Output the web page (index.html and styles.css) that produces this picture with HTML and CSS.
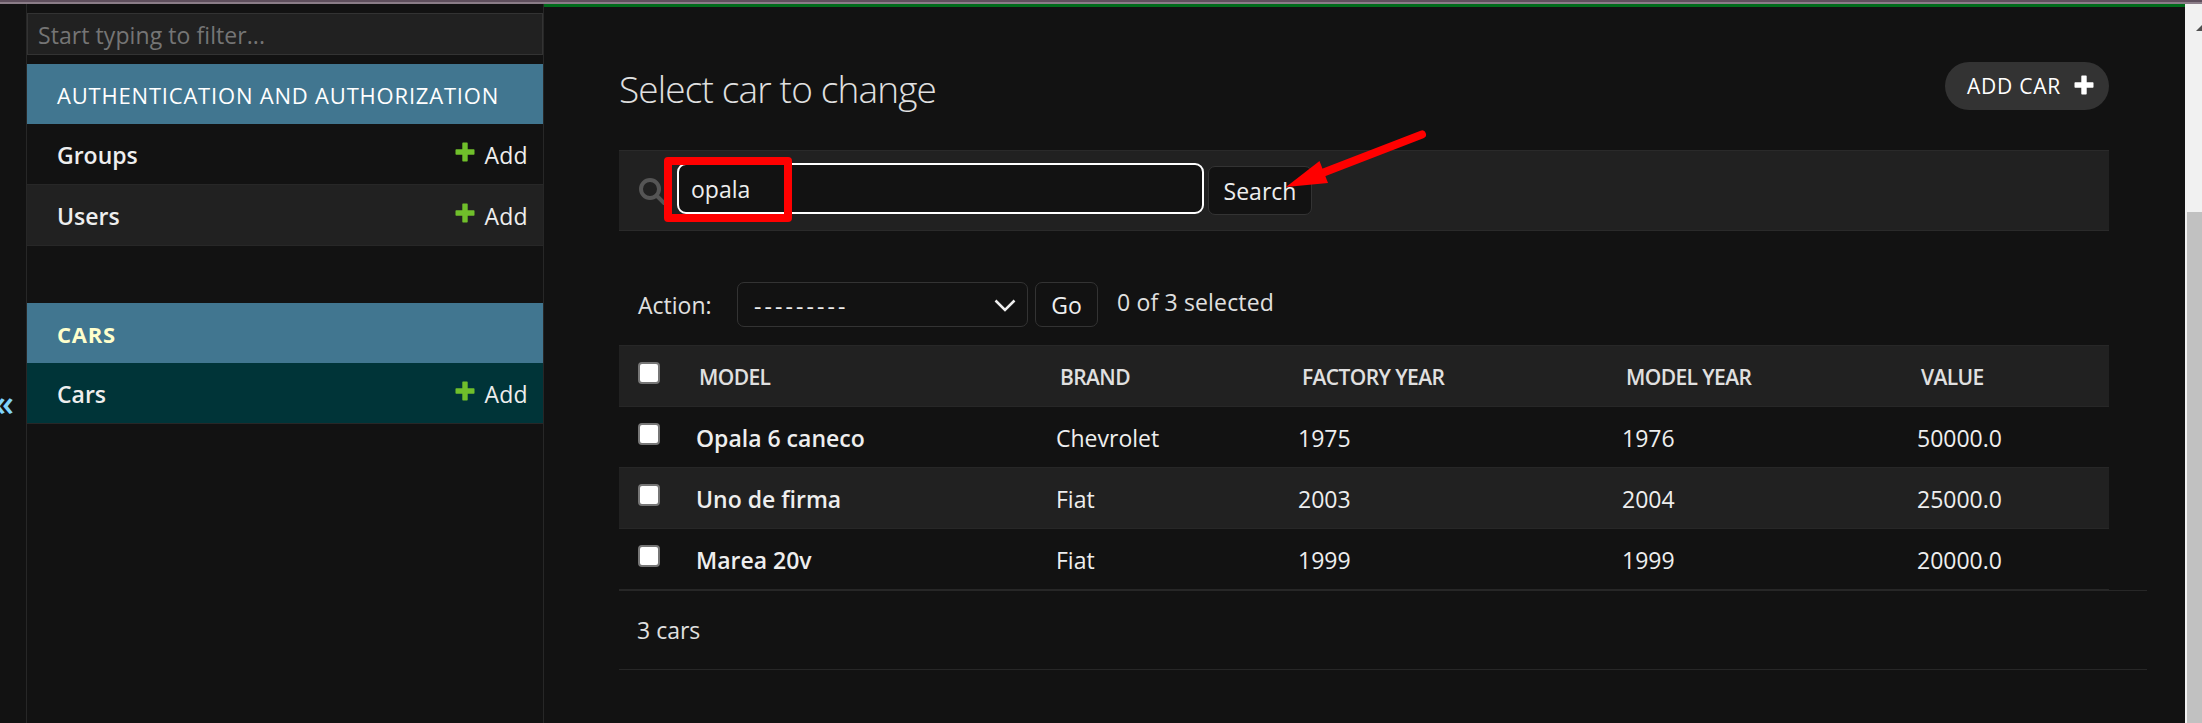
FILE: index.html
```html
<!DOCTYPE html>
<html lang="en">
<head>
<meta charset="utf-8">
<title>Select car to change</title>
<link rel="stylesheet" href="styles.css">
</head>
<body>
<svg class="defs" width="0" height="0"><defs>
<symbol id="plus" viewBox="0 0 20 20"><path d="M8 .5h4q.7 0 .7.7V7.3h6.1q.7 0 .7.7v4q0 .7-.7.7h-6.1v6.1q0 .7-.7.7H8q-.7 0-.7-.7v-6.1H1.200q-.7 0-.7-.7V8q0-.7.7-.7h6.100V1.200q0-.7.7-.7z"/></symbol>
</defs></svg>
<div class="browser-edge"></div>
<div class="shell">
  <div class="toggle"><span>«</span></div>
  <nav class="sidebar">
    <div class="filter">Start typing to filter...</div>
    <section class="module">
      <h2 class="caption">AUTHENTICATION AND AUTHORIZATION</h2>
      <div class="model"><b>Groups</b><a class="add"><svg class="plus"><use href="#plus"/></svg><span>Add</span></a></div>
      <div class="model alt"><b>Users</b><a class="add"><svg class="plus"><use href="#plus"/></svg><span>Add</span></a></div>
    </section>
    <section class="module">
      <h2 class="caption current">CARS</h2>
      <div class="model selected"><b>Cars</b><a class="add"><svg class="plus"><use href="#plus"/></svg><span>Add</span></a></div>
    </section>
  </nav>
  <main class="content">
    <header class="heading">
      <h1>Select car to change</h1>
      <a class="addlink"><span>ADD CAR</span><svg class="plus white"><use href="#plus"/></svg></a>
    </header>
    <div class="toolbar">
      <svg class="lens" viewBox="0 0 27 27"><circle cx="11" cy="11" r="9" /><path d="M17.500 17.500L26 26"/></svg>
      <div class="searchbar">opala</div>
      <button class="btn search">Search</button>
    </div>
    <div class="actions">
      <span class="label">Action:</span>
      <div class="select"><span class="dashes">---------</span><svg class="chevron" viewBox="0 0 22 13"><path d="M1.500 1.500L11 11L20.500 1.500"/></svg></div>
      <button class="btn go">Go</button>
      <span class="counter">0 of 3 selected</span>
    </div>
    <div class="results">
      <div class="row head"><i class="check"></i><span>MODEL</span><span>BRAND</span><span>FACTORY YEAR</span><span>MODEL YEAR</span><span>VALUE</span></div>
      <div class="row"><i class="check"></i><b>Opala 6 caneco</b><span>Chevrolet</span><span>1975</span><span>1976</span><span>50000.0</span></div>
      <div class="row alt"><i class="check"></i><b>Uno de firma</b><span>Fiat</span><span>2003</span><span>2004</span><span>25000.0</span></div>
      <div class="row"><i class="check"></i><b>Marea 20v</b><span>Fiat</span><span>1999</span><span>1999</span><span>20000.0</span></div>
    </div>
    <p class="paginator">3 cars</p>
  </main>
  <div class="scrollbar"><svg class="up" viewBox="0 0 6 6"><path d="M0 6L6 0V6z"/></svg><div class="thumb"></div></div>
</div>
<div class="mark"></div>
<svg class="arrow" viewBox="0 0 150 66"><path class="shaft" d="M142 8.500L41 47.500"/><path class="tip" d="M6 61L39.500 35L48 57z"/></svg>
</body>
</html>
```
FILE: styles.css
```css
* { box-sizing: border-box; }
body { margin: 0; height: 723px; overflow: hidden; background: #121212; color: #eee; font: 23px/62px "Open Sans", "Noto Sans", sans-serif; white-space: nowrap; }
h1, h2, p { margin: 0; font: inherit; }
b { font-weight: 600; }
.defs { display: block; position: absolute; }
.browser-edge { height: 4px; background: #5f4f5d; border-bottom: 2px solid #8b7d88; }
.shell { display: flex; height: 719px; }
.toggle { display: flex; justify-content: flex-end; width: 26px; padding: 369px 12px 0 0; color: #81d4fa; font-size: 36px; font-weight: 600; line-height: 60px; }
.sidebar { width: 518px; padding-top: 9px; border: solid #272727; border-width: 0 1px; }
.filter { height: 42px; padding-left: 10px; margin-bottom: 9px; background: #212121; border: 1px solid #333; color: #757575; line-height: 42px; letter-spacing: .07px; }
.module { margin-bottom: 57px; }
.caption { height: 60px; padding-left: 30px; background: #417690; color: #fff; font-size: 22px; line-height: 62px; letter-spacing: .8px; }
.current { color: #ffc; font-weight: 700; }
.model { display: flex; justify-content: space-between; height: 61px; padding: 0 15px 0 30px; border-bottom: 1px solid #272727; }
.alt { background: #212121; }
.selected { background: #003438; }
.add { display: flex; gap: 9px; letter-spacing: .3px; }
.plus { width: 20px; height: 20px; margin-top: 18px; fill: #70bf2b; }
.white { fill: #fff; margin: 0 0 3px; }
.content { width: 1641px; padding: 55px 38px 0 75px; border-top: 3px solid #006b1b; }
.heading { display: flex; justify-content: space-between; height: 88px; padding-right: 38px; }
.heading h1 { font-size: 37px; font-weight: 300; line-height: 54px; color: #e0e0e0; letter-spacing: -.85px; }
.addlink { display: flex; align-items: center; justify-content: space-between; width: 164px; height: 48px; padding: 0 15px 0 22px; border-radius: 24px; background: #333; color: #fff; font-size: 21px; line-height: 48px; letter-spacing: .76px; }
.toolbar { display: flex; width: 1490px; height: 81px; padding: 12px 0 0 20px; background: #212121; border: solid #2a2a2a; border-width: 1px 0; }
.lens { width: 27px; height: 27px; margin: 15px 11px 0 0; fill: none; stroke: #555; stroke-width: 4; }
.searchbar { width: 527px; height: 51px; padding-left: 12px; border: 2.500px solid #fff; border-radius: 9px; background: #121212; line-height: 48px; }
.btn { height: 45px; padding: 0; border: 1px solid #333; border-radius: 7px; background: #121212; color: #eee; font: inherit; line-height: 44px; text-align: center; }
.search { width: 104px; height: 49px; margin: 3px 0 0 4px; line-height: 49px; }
.actions { display: flex; height: 114px; padding: 51px 0 0 19px; line-height: 46px; }
.label { width: 99px; color: #e0e0e0; }
.select { display: flex; justify-content: space-between; width: 291px; height: 45px; padding: 0 11px 0 16px; border: 1px solid #333; border-radius: 7px; line-height: 46px; }
.dashes { letter-spacing: 3.100px; }
.chevron { width: 22px; height: 13px; margin-top: 16px; fill: none; stroke: #eee; stroke-width: 2.500; }
.go { width: 63px; margin: 0 19px 0 7px; }
.counter { color: #e0e0e0; line-height: 40px; letter-spacing: .16px; }
.results { width: 1490px; }
.row { display: grid; grid-template-columns: 76px 361px 242px 324px 295px 1fr; height: 61px; border-bottom: 1px solid #272727; line-height: 63px; }
.row b { padding-left: 1px; }
.head { height: 62px; background: #212121; border-top: 1px solid #272727; color: #e0e0e0; font-size: 21px; font-weight: 600; line-height: 62px; letter-spacing: -.6px; }
.head span { padding-left: 4px; }
.check { width: 22px; height: 22px; margin: 16px 0 0 19px; border: 2px solid #767676; border-radius: 4px; background: #fff; }
.paginator { height: 80px; padding: 8px 0 0 18px; border: solid #272727; border-width: 1px 0; color: #e0e0e0; }
.scrollbar { width: 17px; padding: 21px 0 0 2px; background: #f1f1f1; }
.up { display: block; width: 6px; height: 6px; margin-left: 9px; fill: #505050; }
.thumb { height: 511px; margin-top: 181px; background: #c1c1c1; }
.mark { position: absolute; left: 664px; top: 157px; width: 128px; height: 65px; border: 8px solid #f00; border-radius: 4px; }
.arrow { position: absolute; left: 1280px; top: 126px; width: 150px; height: 66px; }
.shaft { stroke: #f00; stroke-width: 8; stroke-linecap: round; }
.tip { fill: #f00; }
```
